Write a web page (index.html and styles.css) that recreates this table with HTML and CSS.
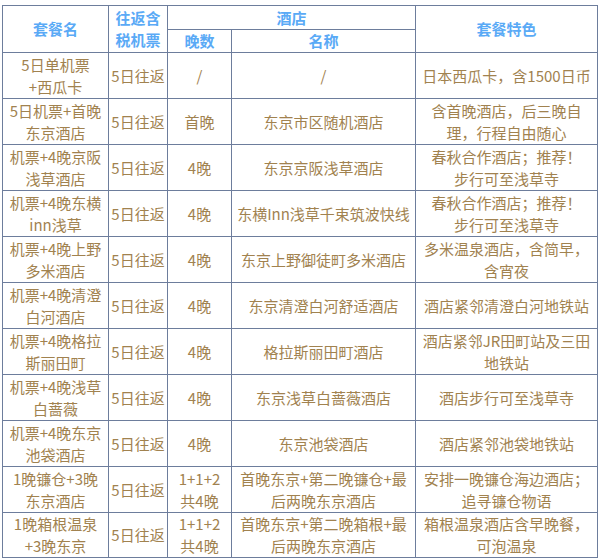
FILE: index.html
```html
<!DOCTYPE html>
<html lang="zh">
<head>
<meta charset="utf-8">
<link rel="stylesheet" href="styles.css">
</head>
<body>
<div class="wrap">
<table class="pkg">
  <colgroup>
    <col class="c1"><col class="c2"><col class="c3"><col class="c4"><col class="c5">
  </colgroup>
  <thead>
    <tr class="h1">
      <th rowspan="2">套餐名</th>
      <th rowspan="2">往返含<br>税机票</th>
      <th colspan="2">酒店</th>
      <th rowspan="2">套餐特色</th>
    </tr>
    <tr class="h2">
      <th>晚数</th>
      <th>名称</th>
    </tr>
  </thead>
  <tbody>
    <tr><td>5日单机票<br>+西瓜卡</td><td>5日往返</td><td>/</td><td>/</td><td>日本西瓜卡，含1500日币</td></tr>
    <tr><td>5日机票+首晚<br>东京酒店</td><td>5日往返</td><td>首晚</td><td>东京市区随机酒店</td><td>含首晚酒店，后三晚自<br>理，行程自由随心</td></tr>
    <tr><td>机票+4晚京阪<br>浅草酒店</td><td>5日往返</td><td>4晚</td><td>东京京阪浅草酒店</td><td>春秋合作酒店；推荐！<br>步行可至浅草寺</td></tr>
    <tr><td>机票+4晚东横<br>inn浅草</td><td>5日往返</td><td>4晚</td><td>东横Inn浅草千束筑波快线</td><td>春秋合作酒店；推荐！<br>步行可至浅草寺</td></tr>
    <tr><td>机票+4晚上野<br>多米酒店</td><td>5日往返</td><td>4晚</td><td>东京上野御徒町多米酒店</td><td>多米温泉酒店，含简早，<br>含宵夜</td></tr>
    <tr><td>机票+4晚清澄<br>白河酒店</td><td>5日往返</td><td>4晚</td><td>东京清澄白河舒适酒店</td><td>酒店紧邻清澄白河地铁站</td></tr>
    <tr><td>机票+4晚格拉<br>斯丽田町</td><td>5日往返</td><td>4晚</td><td>格拉斯丽田町酒店</td><td>酒店紧邻JR田町站及三田<br>地铁站</td></tr>
    <tr><td>机票+4晚浅草<br>白蔷薇</td><td>5日往返</td><td>4晚</td><td>东京浅草白蔷薇酒店</td><td>酒店步行可至浅草寺</td></tr>
    <tr><td>机票+4晚东京<br>池袋酒店</td><td>5日往返</td><td>4晚</td><td>东京池袋酒店</td><td>酒店紧邻池袋地铁站</td></tr>
    <tr><td>1晚镰仓+3晚<br>东京酒店</td><td>5日往返</td><td>1+1+2<br>共4晚</td><td>首晚东京+第二晚镰仓+最<br>后两晚东京酒店</td><td>安排一晚镰仓海边酒店；<br>追寻镰仓物语</td></tr>
    <tr><td>1晚箱根温泉<br>+3晚东京</td><td>5日往返</td><td>1+1+2<br>共4晚</td><td>首晚东京+第二晚箱根+最<br>后两晚东京酒店</td><td>箱根温泉酒店含早晚餐，<br>可泡温泉</td></tr>
  </tbody>
</table>
</div>
</body>
</html>
```
FILE: styles.css
```css
html, body {
  margin: 0;
  padding: 0;
  background: #ffffff;
}
.wrap {
  padding: 5px 0 0 2px;
  width: 596px;
}
.pkg {
  border-collapse: collapse;
  table-layout: fixed;
  width: 595px;
  font-family: "Microsoft YaHei", "Noto Sans CJK SC", "Noto Sans", sans-serif;
  font-size: 15px;
  line-height: 22px;
}
.c1 { width: 106px; }
.c2 { width: 59px; }
.c3 { width: 64px; }
.c4 { width: 184px; }
.c5 { width: 182px; }
.pkg th, .pkg td {
  border: 1px solid #6d7d9c;
  padding: 0;
  text-align: center;
  vertical-align: middle;
  overflow: hidden;
  white-space: nowrap;
}
.pkg th {
  color: #5aaaf6;
  font-weight: bold;
}
.pkg td {
  color: #a1824f;
  font-weight: normal;
}
.h1 { height: 24px; }
.h2 { height: 23px; }
.pkg tbody tr { height: 46px; }
.pkg tbody tr:last-child { height: 45px; }
```
